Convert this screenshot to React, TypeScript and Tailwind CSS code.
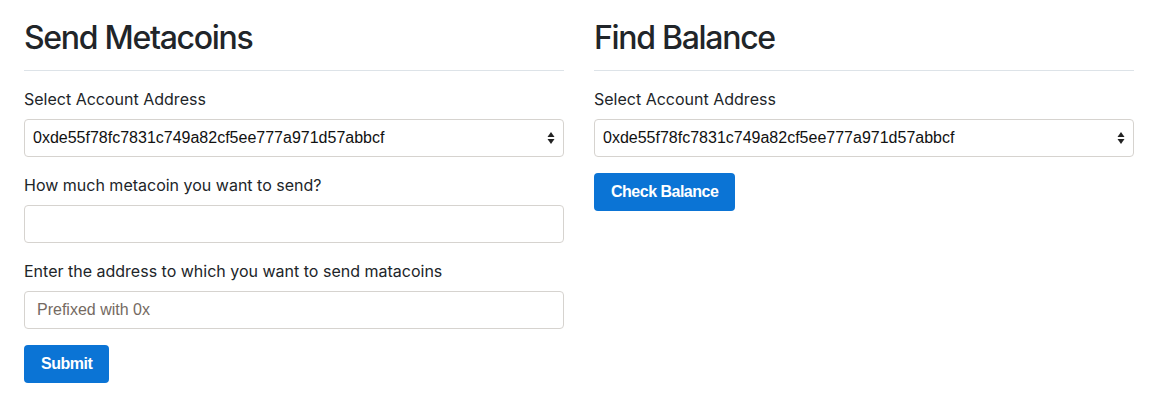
const ADDRESS = '0xde55f78fc7831c749a82cf5ee777a971d57abbcf';

const SelectArrows = () => (
    <svg width="8" height="14" viewBox="0 0 8 14" className="absolute right-[8px] top-1/2 -translate-y-1/2">
        <path d="M4 1 L7.5 6 L0.5 6 Z" fill="#222" />
        <path d="M4 13 L7.5 8 L0.5 8 Z" fill="#222" />
    </svg>
);

const AccountSelect = () => (
    <div className="relative h-[38px] rounded-[4px] border border-[#d6d3cf] bg-white">
        <div className="flex h-full items-center pl-[8px] text-[16px] text-[#111]">{ADDRESS}</div>
        <SelectArrows />
    </div>
);

const Label = ({ children }: { children: React.ReactNode }) => (
    <label className="mb-[8px] block font-['Inter'] text-[16px] leading-[24px] text-[#212529]">{children}</label>
);

const Heading = ({ children }: { children: React.ReactNode }) => (
    <>
        <h2 className="pt-[19px] font-['Inter'] text-[32px] font-medium leading-[38px] tracking-[-1.3px] text-[#212529]">{children}</h2>
        <hr className="mb-[16px] mt-[13px] border-t border-[#dde3e8]" />
    </>
);

const Button = ({ children }: { children: React.ReactNode }) => (
    <button className="h-[38px] rounded-[4px] bg-[#0b74d5] px-[17px] text-[16px] font-bold tracking-[-0.5px] text-white">
        {children}
    </button>
);

const App = () => {
    return (
        <div className="min-h-screen bg-white pl-[24px] pr-[28px]" style={{ fontFamily: '"Liberation Sans", Arial, sans-serif' }}>
            <div className="grid grid-cols-[540px_540px] gap-[30px]">
                {/* Send */}
                <div>
                    <Heading>Send Metacoins</Heading>
                    <div className="mb-[16px]">
                        <Label>Select Account Address</Label>
                        <AccountSelect />
                    </div>
                    <div className="mb-[16px]">
                        <Label>How much metacoin you want to send?</Label>
                        <input className="block h-[38px] w-full rounded-[4px] border border-[#d6d3cf] px-[12px] text-[16px]" />
                    </div>
                    <div className="mb-[16px]">
                        <Label>Enter the address to which you want to send matacoins</Label>
                        <input
                            placeholder="Prefixed with 0x"
                            className="block h-[38px] w-full rounded-[4px] border border-[#d6d3cf] px-[12px] text-[16px] placeholder:text-[#756a62]"
                        />
                    </div>
                    <Button>Submit</Button>
                </div>

                {/* Balance */}
                <div>
                    <Heading>Find Balance</Heading>
                    <div className="mb-[16px]">
                        <Label>Select Account Address</Label>
                        <AccountSelect />
                    </div>
                    <Button>Check Balance</Button>
                </div>
            </div>
        </div>
    );
};

export default App;
